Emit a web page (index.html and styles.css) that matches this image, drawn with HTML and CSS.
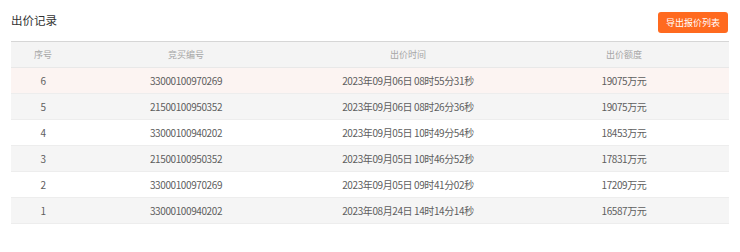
FILE: index.html
```html
<!DOCTYPE html>
<html lang="zh-CN">
<head>
<meta charset="utf-8">
<title>出价记录</title>
<link rel="stylesheet" href="styles.css">
</head>
<body>
<div class="page">
  <div class="top">
    <h2 class="title">出价记录</h2>
    <button class="export-btn" type="button">导出报价列表</button>
  </div>
  <table class="records">
    <colgroup>
      <col class="c1"><col class="c2"><col class="c3"><col class="c4">
    </colgroup>
    <thead>
      <tr><th>序号</th><th>竞买编号</th><th>出价时间</th><th>出价额度</th></tr>
    </thead>
    <tbody>
      <tr class="active"><td>6</td><td>33000100970269</td><td>2023年09月06日 08时55分31秒</td><td>19075万元</td></tr>
      <tr><td>5</td><td>21500100950352</td><td>2023年09月06日 08时26分36秒</td><td>19075万元</td></tr>
      <tr><td>4</td><td>33000100940202</td><td>2023年09月05日 10时49分54秒</td><td>18453万元</td></tr>
      <tr><td>3</td><td>21500100950352</td><td>2023年09月05日 10时46分52秒</td><td>17831万元</td></tr>
      <tr><td>2</td><td>33000100970269</td><td>2023年09月05日 09时41分02秒</td><td>17209万元</td></tr>
      <tr><td>1</td><td>33000100940202</td><td>2023年08月24日 14时14分14秒</td><td>16587万元</td></tr>
    </tbody>
  </table>
</div>
</body>
</html>
```
FILE: styles.css
```css
html, body {
  margin: 0;
  padding: 0;
  background: #fff;
}
body {
  font-family: "Noto Sans CJK SC", "Noto Sans", sans-serif;
  color: #555;
}
.page {
  width: 718px;
  padding: 12px 11px 0 11px;
}
.top {
  display: flex;
  justify-content: space-between;
  align-items: flex-start;
  height: 21px;
  margin-bottom: 8px;
}
.title {
  margin: 0;
  font-size: 11.5px;
  line-height: 16px;
  font-weight: normal;
  color: #333;
}
.export-btn {
  width: 70px;
  height: 21px;
  margin-right: 1px;
  padding: 0;
  border: none;
  border-radius: 3px;
  background: #ff6a1f;
  color: #fff;
  font-family: "Noto Sans CJK SC", sans-serif;
  font-size: 9px;
  line-height: 21px;
}
.records {
  width: 718px;
  border-collapse: collapse;
  table-layout: fixed;
}
.c1 { width: 64px; }
.c2 { width: 222px; }
.c3 { width: 222px; }
.c4 { width: 210px; }
.records th {
  height: 25px;
  padding: 0;
  background: #f4f4f4;
  border-top: 1px solid #d6d6d6;
  border-bottom: 1px solid #e8e8e8;
  font-size: 9px;
  font-weight: normal;
  color: #a6a6a6;
  text-align: center;
}
.records td {
  height: 25px;
  padding: 0;
  border-bottom: 1px solid #ededed;
  font-size: 10px;
  letter-spacing: -0.4px;
  color: #5e5e5e;
  text-align: center;
  white-space: nowrap;
}
.records tbody tr:nth-child(odd) td {
  background: #fff;
}
.records tbody tr:nth-child(even) td {
  background: #f5f5f5;
}
.records tbody tr.active td {
  background: #fcf4f2;
}
```
